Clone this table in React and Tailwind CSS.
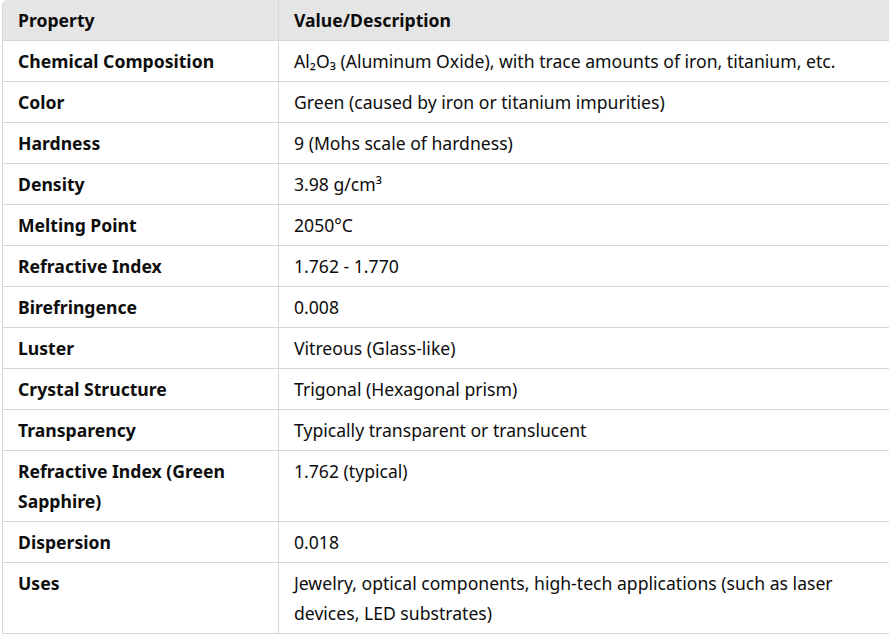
import React from 'react'

const rows = [
  ['Chemical Composition', 'Al₂O₃ (Aluminum Oxide), with trace amounts of iron, titanium, etc.'],
  ['Color', 'Green (caused by iron or titanium impurities)'],
  ['Hardness', '9 (Mohs scale of hardness)'],
  ['Density', '3.98 g/cm³'],
  ['Melting Point', '2050°C'],
  ['Refractive Index', '1.762 - 1.770'],
  ['Birefringence', '0.008'],
  ['Luster', 'Vitreous (Glass-like)'],
  ['Crystal Structure', 'Trigonal (Hexagonal prism)'],
  ['Transparency', 'Typically transparent or translucent'],
  ['Refractive Index (Green Sapphire)', '1.762 (typical)'],
  ['Dispersion', '0.018'],
  [
    'Uses',
    <>
      Jewelry, optical components, high-tech applications (such as laser
      <br />
      devices, LED substrates)
    </>,
  ],
]

export default function App() {
  return (
    <div
      className="w-[889px] h-[635px] overflow-hidden bg-white pl-[2px] text-[17.6px] leading-[30px] text-[#0d0d0d]"
      style={{ fontFamily: '"Noto Sans", "Open Sans", sans-serif' }}
    >
      <table className="w-[920px] border-separate border-spacing-0 table-fixed">
        <colgroup>
          <col className="w-[276px]" />
          <col />
        </colgroup>
        <thead>
          <tr className="bg-[#e5e5e5]">
            <th className="h-[40px] border-l border-b border-[#d6d6d6] rounded-tl-[6px] px-[15px] py-[5px] text-left font-bold">
              Property
            </th>
            <th className="border-l border-b border-[#d6d6d6] px-[15px] py-[5px] text-left font-bold">
              Value/Description
            </th>
          </tr>
        </thead>
        <tbody>
          {rows.map(([k, v]) => (
            <tr key={k}>
              <td className="border-l border-b border-[#d6d6d6] px-[15px] py-[5px] align-top font-bold">
                {k}
              </td>
              <td className="border-l border-b border-[#d6d6d6] px-[15px] py-[5px] align-top">
                {v}
              </td>
            </tr>
          ))}
        </tbody>
      </table>
    </div>
  )
}
